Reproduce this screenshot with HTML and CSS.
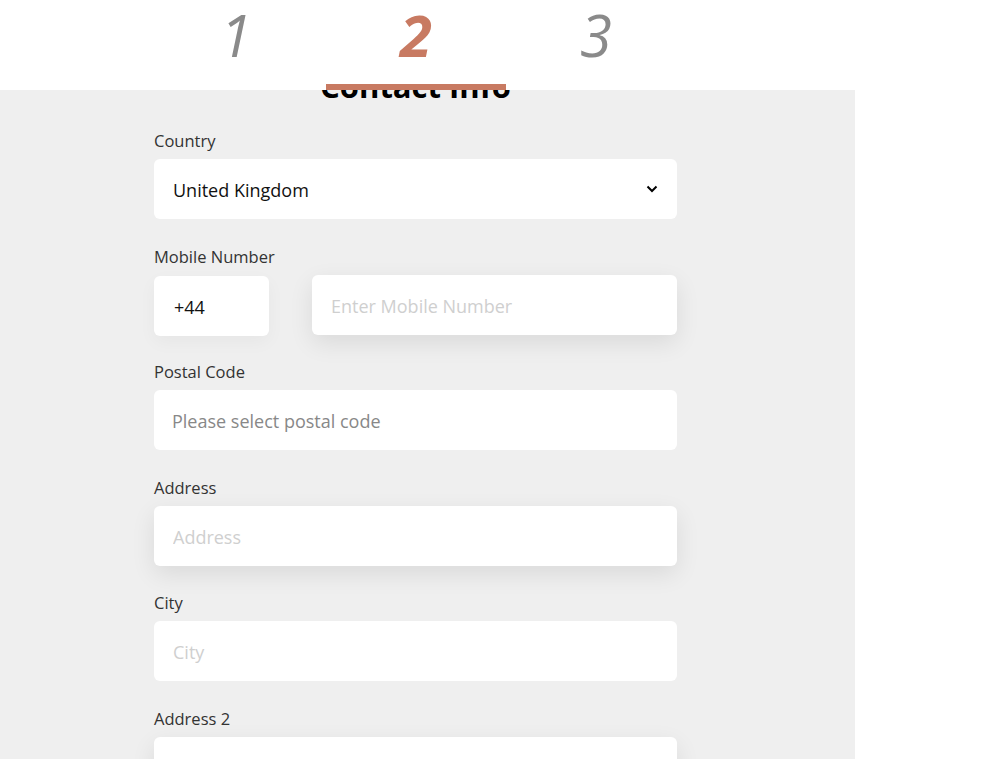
FILE: index.html
```html
<!DOCTYPE html>
<html lang="en">
<head>
    <meta charset="UTF-8">
    <meta name="viewport" content="width=device-width, initial-scale=1.0">
    <title>Contact Info</title>
    <link rel="stylesheet" href="styles.css">
</head>
<body>
    <header class="steps">
        <div class="step">1</div>
        <div class="step active">2</div>
        <div class="step">3</div>
    </header>

    <main class="panel">
        <h2 class="panel-title">Contact Info</h2>
        <form class="contact-form">
            <div class="field">
                <label for="country">Country</label>
                <div class="select-box">
                    <span class="select-value">United Kingdom</span>
                    <svg class="chevron" width="12" height="8" viewBox="0 0 12 8">
                        <path d="M1.5 1.5 L6 6 L10.5 1.5" fill="none" stroke="#000" stroke-width="2"/>
                    </svg>
                </div>
            </div>

            <div class="field">
                <label for="mobile">Mobile Number</label>
                <div class="phone-row">
                    <input type="text" class="input code-input" value="+44">
                    <input type="text" id="mobile" class="input raised" placeholder="Enter Mobile Number">
                </div>
            </div>

            <div class="field">
                <label for="postal">Postal Code</label>
                <div class="select-box muted" id="postal">Please select postal code</div>
            </div>

            <div class="field">
                <label for="address">Address</label>
                <input type="text" id="address" class="input raised" placeholder="Address">
            </div>

            <div class="field">
                <label for="city">City</label>
                <input type="text" id="city" class="input" placeholder="City">
            </div>

            <div class="field">
                <label for="address2">Address 2</label>
                <input type="text" id="address2" class="input raised">
            </div>
        </form>
    </main>
</body>
</html>
```

FILE: styles.css
```css
body {
    margin: 0;
    background-color: #fff;
    font-family: "Open Sans", "Noto Sans", sans-serif;
    height: 759px;
    overflow: hidden;
}

.steps {
    position: relative;
    z-index: 1;
    height: 90px;
    background-color: #fff;
    display: flex;
    padding-left: 146px;
    box-sizing: border-box;
}

.step {
    width: 180px;
    height: 90px;
    box-sizing: border-box;
    text-align: center;
    font-size: 58px;
    font-style: italic;
    line-height: 70px;
    color: #8a8a8a;
}

.step.active {
    color: #c87a62;
    font-weight: 700;
    border-bottom: 6px solid #c87a62;
}

.panel {
    width: 855px;
    min-height: 669px;
    background-color: #efefef;
    padding-left: 154px;
    box-sizing: border-box;
}

.panel-title {
    margin: -19px 0 0 0;
    width: 523px;
    text-align: center;
    font-size: 31px;
    font-weight: 700;
    line-height: 30px;
    color: #000;
}

.contact-form {
    width: 523px;
    padding-top: 30px;
}

.field {
    margin-bottom: 27.6px;
}

.field label {
    display: block;
    font-size: 16.5px;
    line-height: 20px;
    color: #333;
    margin-bottom: 8px;
}

.select-box,
.input {
    display: flex;
    align-items: center;
    justify-content: space-between;
    width: 100%;
    height: 60px;
    padding: 2px 19px 0 19px;
    box-sizing: border-box;
    background-color: #fff;
    border: none;
    border-radius: 6px;
    font-family: inherit;
    font-size: 18px;
    color: #111;
    outline: none;
}

.select-box.muted {
    color: #888;
    padding-left: 18px;
}

.chevron {
    margin-right: 0;
    margin-top: -2px;
}

.input::placeholder {
    color: #cfcfcf;
}

.raised {
    box-shadow: 0 8px 24px rgba(0, 0, 0, 0.09);
}

.phone-row {
    display: flex;
    align-items: flex-start;
    gap: 43px;
    height: 60px;
}

.code-input {
    width: 115px;
    flex: none;
    margin-top: 1px;
    padding-left: 20px;
    box-shadow: 0 6px 18px rgba(0, 0, 0, 0.04);
}

.phone-row .raised {
    flex: 1;
}
```
